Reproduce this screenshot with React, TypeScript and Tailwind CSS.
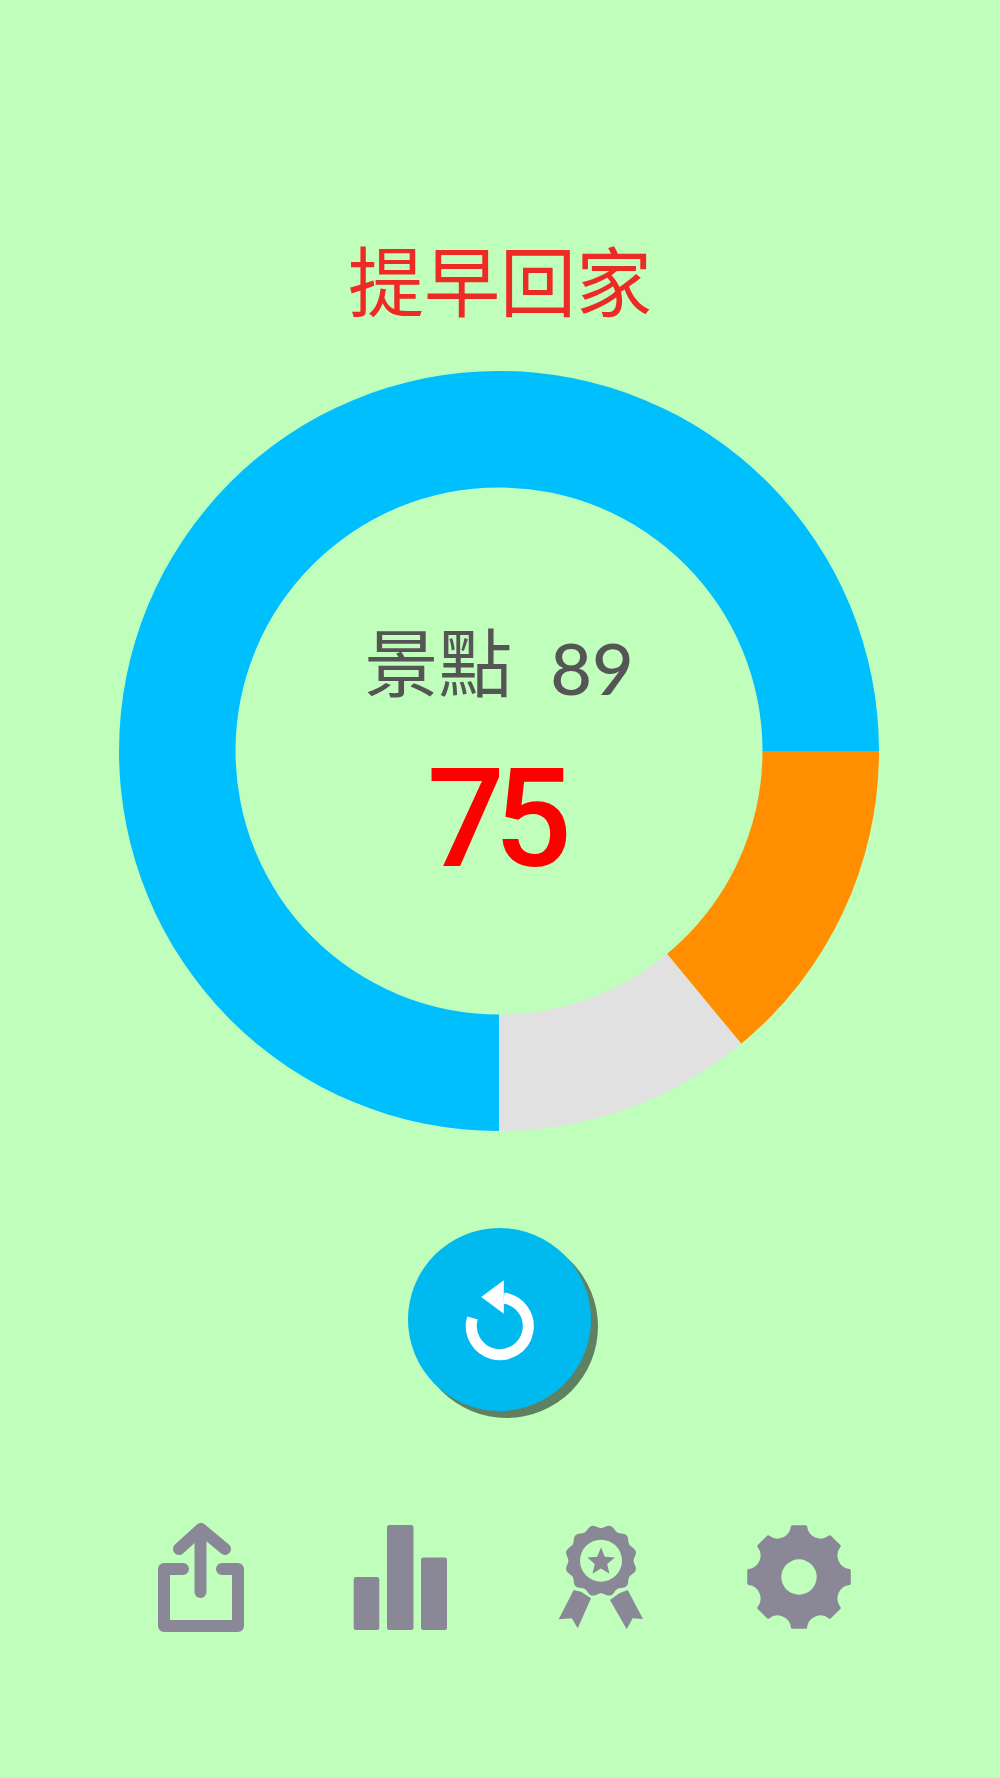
import React from "react";

const CJK = '"Noto Sans CJK TC", "Noto Sans CJK SC", sans-serif';
const LATO = 'Lato, "Noto Sans CJK TC", sans-serif';
const ROBOTO = 'Roboto, "Noto Sans CJK TC", sans-serif';

const polar = (cx: number, cy: number, r: number, deg: number) => {
  const a = (deg * Math.PI) / 180;
  return [cx + r * Math.sin(a), cy - r * Math.cos(a)];
};

function seg(from: number, to: number) {
  const R = 380, r = 263.5, c = 380;
  const [a, b] = polar(c, c, R, from);
  const [d, e] = polar(c, c, R, to);
  const [f, g] = polar(c, c, r, to);
  const [h, i] = polar(c, c, r, from);
  const large = to - from > 180 ? 1 : 0;
  return `M${a} ${b}A${R} ${R} 0 ${large} 1 ${d} ${e}L${f} ${g}A${r} ${r} 0 ${large} 0 ${h} ${i}Z`;
}

function Ring() {
  return (
    <svg width="760" height="760" viewBox="0 0 760 760" className="block">
      <path d={seg(90, 140.4)} fill="#ff8f00" />
      <path d={seg(140.4, 180)} fill="#e1e1e1" />
      <path d={seg(180, 450)} fill="#00bfff" />
    </svg>
  );
}

function ShareIcon() {
  return (
    <svg width="110" height="110" viewBox="0 0 110 110" fill="none" stroke="#8a8796" strokeWidth="12" strokeLinecap="round" strokeLinejoin="round">
      <path d="M37 47H18V104H92V47H76" />
      <path d="M54.5 70V10" />
      <path d="M33 27L55 7L79 27" />
    </svg>
  );
}

function BarsIcon() {
  return (
    <svg width="110" height="110" viewBox="0 0 110 110" fill="#8a8796">
      <rect x="7.7" y="55" width="25.6" height="53" rx="2.5" />
      <rect x="41" y="3" width="26.5" height="105" rx="2.5" />
      <rect x="75" y="35.5" width="26" height="72.5" rx="2.5" />
    </svg>
  );
}

function scallopPath() {
  let d = "";
  for (let i = 0; i < 240; i++) {
    const t = (i / 240) * 360;
    const r = 34.3 + 1.7 * Math.cos(((12 * t + 180) * Math.PI) / 180);
    const [x, y] = polar(55, 38.7, r, t);
    d += `${i ? "L" : "M"}${x.toFixed(2)} ${y.toFixed(2)}`;
  }
  d += "Z";
  d += "M34 38.7a21 21 0 1 0 42 0a21 21 0 1 0 -42 0Z";
  return d;
}

function starPoints() {
  const pts: string[] = [];
  for (let i = 0; i < 10; i++) {
    const [x, y] = polar(55, 40, i % 2 ? 6.5 : 14.5, i * 36);
    pts.push(`${x.toFixed(2)},${y.toFixed(2)}`);
  }
  return pts.join(" ");
}

function AwardIcon() {
  return (
    <svg width="110" height="110" viewBox="0 0 110 110" fill="#8a8796">
      <path d={scallopPath()} fillRule="evenodd" />
      <polygon points={starPoints()} />
      <polygon points="27.7,68 35,69.7 45,76.3 31.7,106.3 25.7,96.3 12.7,97.3" />
      <polygon points="64,78 73.3,71.3 81.7,68 97,97 86.7,96.3 80.7,107.3" />
    </svg>
  );
}

function gearPath() {
  const R = 50.7, half = 7.5;
  let d = "";
  for (let i = 0; i < 8; i++) {
    const t = i * 45;
    const [x1, y1] = polar(55, 55, R, t - half);
    const [x2, y2] = polar(55, 55, R, t + half);
    d += `${i ? "A15 15 0 0 0 " : "M"}${x1.toFixed(2)} ${y1.toFixed(2)}L${x2.toFixed(2)} ${y2.toFixed(2)}`;
  }
  const [x0, y0] = polar(55, 55, R, -half);
  d += `A15 15 0 0 0 ${x0.toFixed(2)} ${y0.toFixed(2)}Z`;
  return d;
}

function GearIcon() {
  return (
    <svg width="110" height="110" viewBox="0 0 110 110">
      <path d={gearPath()} fill="#8a8796" stroke="#8a8796" strokeWidth="3" strokeLinejoin="round" />
      <circle cx="55" cy="55" r="17.7" fill="#bfffbb" />
    </svg>
  );
}

function ReplayIcon() {
  return (
    <svg width="100" height="100" viewBox="0 0 100 100" fill="none">
      <path d="M22.5 48A28.5 28.5 0 1 0 53.8 28" stroke="#ffffff" strokeWidth="11" />
      <polygon points="53.8,10.3 31.2,27 53.8,43.7" fill="#ffffff" />
    </svg>
  );
}

export default function App() {
  return (
    <div className="flex h-[1778px] w-[1000px] flex-col items-center overflow-hidden bg-[#bfffbb]">
      <h1
        className="mt-[233px] h-[90px] text-[76px] font-normal leading-[90px] text-[#ee2a24]"
        style={{ fontFamily: CJK }}
      >
        提早回家
      </h1>
      <div className="relative ml-[-2px] mt-[48px] h-[760px] w-[760px]">
        <Ring />
        <div className="absolute inset-0 flex flex-col items-center">
          <div className="mt-[245px] flex h-[86px] items-center text-[74px] font-normal leading-[86px] text-[#555555]" style={{ fontFamily: CJK }}>
            <span>景點</span>
            <span className="ml-[38px] mt-[16px] text-[72px] font-medium" style={{ fontFamily: LATO }}>89</span>
          </div>
          <div className="mr-[10px] mt-[47px] text-[137px] font-medium leading-[140px] tracking-[-0.08em] text-[#ff0000]" style={{ fontFamily: ROBOTO }}>
            75
          </div>
        </div>
      </div>
      <button className="ml-[-1px] mt-[97px] flex h-[183px] w-[183px] items-center justify-center rounded-full bg-[#00b9ee] shadow-[7px_7px_0_0_#5f8162]">
        <ReplayIcon />
      </button>
      <div className="mt-[111px] flex">
        <div className="flex w-[200px] justify-center"><ShareIcon /></div>
        <div className="flex w-[200px] justify-center"><BarsIcon /></div>
        <div className="flex w-[200px] justify-center"><AwardIcon /></div>
        <div className="ml-[-2px] flex w-[200px] justify-center"><GearIcon /></div>
      </div>
    </div>
  );
}
